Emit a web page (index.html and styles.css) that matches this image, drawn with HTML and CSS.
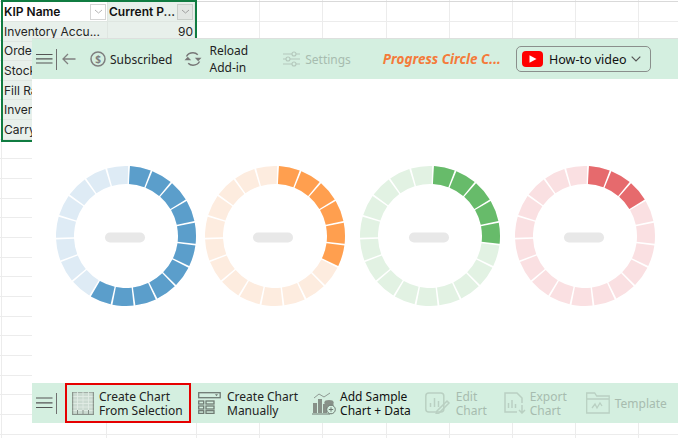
FILE: index.html
```html
<!DOCTYPE html>
<html lang="en">
<head>
<meta charset="utf-8">
<title>Progress Circle Chart</title>
<link rel="stylesheet" href="styles.css">
</head>
<body>
<div class="sheet">
  <div class="table">
    <div class="cell head active"><span>KIP Name</span><i class="filter"><svg width="9" height="5" viewBox="0 0 9 5"><path d="M1 1l3.5 3L8 1" fill="none" stroke="#b5b5b5"/></svg></i></div>
    <div class="cell head"><span>Current P...</span><i class="filter on"><svg width="9" height="5" viewBox="0 0 9 5"><path d="M1 1l3.5 3L8 1" fill="none" stroke="#a0a0a0"/></svg></i></div>
    <div class="cell">Inventory Accu...</div><div class="cell num">90</div>
    <div class="cell">Order</div><div class="cell"></div>
    <div class="cell">Stock</div><div class="cell"></div>
    <div class="cell">Fill Rate</div><div class="cell"></div>
    <div class="cell">Inventory</div><div class="cell"></div>
    <div class="cell">Carry</div><div class="cell"></div>
  </div>
</div>

<section class="panel">
  <header class="bar top">
    <svg class="ic-menu" width="17" height="12" viewBox="0 0 17 12"><path d="M0 1.500h16.500M0 5.800h16.500M0 10h16.500" stroke="#555" stroke-width="1.200"/></svg>
    <span class="rule tall"></span>
    <svg class="ic-back" width="14" height="12" viewBox="0 0 14 12"><path d="M13.500 6H1M6 1L1 6l5 5" fill="none" stroke="#808080" stroke-width="1.300"/></svg>
    <svg class="ic-sub" width="16" height="16" viewBox="0 0 16 16"><circle cx="8" cy="8" r="7" fill="none" stroke="#7f7f7f" stroke-width="1.500"/><text x="8" y="11.800" text-anchor="middle" class="dollar">$</text></svg>
    <span class="label sub">Subscribed</span>
    <svg class="ic-reload" width="18" height="16" viewBox="0 0 18 16"><path d="M2.500 5.500C3.800 3 6 1.800 9 1.800c2 0 3.500.7 4.800 2M15.500 10.500C14.200 13 12 14.200 9 14.200c-2 0-3.500-.7-4.800-2" fill="none" stroke="#777" stroke-width="1.500"/><path d="M17.500 6.800H10.800l3.400 3.500zM.5 9.200h6.700L3.800 5.700z" fill="#777"/></svg>
    <span class="label reload">Reload<br>Add-in</span>
    <svg class="ic-set" width="17" height="16" viewBox="0 0 17 16"><g fill="none" stroke="#b4c8bc" stroke-width="1.100"><path d="M0 3h9M13 3h4M0 8h3M7 8h10M0 13h9M13 13h4"/><circle cx="11" cy="3" r="2"/><circle cx="5" cy="8" r="2"/><circle cx="11" cy="13" r="2"/></g></svg>
    <span class="label off settings">Settings</span>
    <span class="title">Progress Circle C...</span>
    <div class="video">
      <svg width="21" height="16" viewBox="0 0 21 16"><rect width="21" height="16" rx="4" fill="#f00"/><path d="M7.500 4.200l7 3.800-7 3.800z" fill="#fff"/></svg>
      <span class="video-text">How-to video</span>
      <svg class="chev" width="10" height="6" viewBox="0 0 10 6"><path d="M.7.7L5 5l4.300-4.300" fill="none" stroke="#555" stroke-width="1.200"/></svg>
    </div>
  </header>

  <main class="charts">
    <svg class="ring" width="140" height="140" viewBox="0 0 140 140">
      <circle class="track t-blue" cx="70" cy="70" r="61" pathLength="360"/>
      <circle class="fill f-blue n11" cx="70" cy="70" r="61" pathLength="360"/>
      <rect class="dash" x="49" y="66.500" width="40" height="10" rx="5"/>
    </svg>
    <svg class="ring" width="140" height="140" viewBox="0 0 140 140">
      <circle class="track t-orange" cx="70" cy="70" r="61" pathLength="360"/>
      <circle class="fill f-orange n6" cx="70" cy="70" r="61" pathLength="360"/>
      <rect class="dash" x="48" y="66.500" width="40" height="10" rx="5"/>
    </svg>
    <svg class="ring" width="140" height="140" viewBox="0 0 140 140">
      <circle class="track t-green" cx="70" cy="70" r="61" pathLength="360"/>
      <circle class="fill f-green n5" cx="70" cy="70" r="61" pathLength="360"/>
      <rect class="dash" x="49" y="66.500" width="40" height="10" rx="5"/>
    </svg>
    <svg class="ring" width="140" height="140" viewBox="0 0 140 140">
      <circle class="track t-red" cx="70" cy="70" r="61" pathLength="360"/>
      <circle class="fill f-red n3" cx="70" cy="70" r="61" pathLength="360"/>
      <rect class="dash" x="49" y="66.500" width="40" height="10" rx="5"/>
    </svg>
  </main>

  <footer class="bar bottom">
    <svg class="ic-menu" width="17" height="12" viewBox="0 0 17 12"><path d="M0 1h16.500M0 5.800h16.500M0 10.500h16.500" stroke="#555" stroke-width="1.200"/></svg>
    <span class="rule short"></span>
    <div class="tool selected">
      <svg width="22" height="23" viewBox="0 0 22 23"><rect x=".5" y=".5" width="21" height="22" fill="#cbdad1" stroke="#a3aea7"/><path d="M0 4.500h22M0 8h22M0 11.500h22M0 15h22M0 18.500h22M5.500 0v23M11 0v23M16.500 0v23" stroke="#e3eee7" stroke-width=".8"/><path d="M.7 0v23M21.300 0v23M0 22.400h22M5.500 18v5M11 18v5M16.500 18v5" stroke="#858f88"/></svg>
      <span class="label two">Create Chart<br>From Selection</span>
    </div>
    <div class="tool manual">
      <svg width="23" height="22" viewBox="0 0 23 22"><g fill="none" stroke="#6f7a73" stroke-width="1.300"><rect x=".7" y=".7" width="21.500" height="5"/><rect x=".7" y="9" width="5" height="3"/><rect x="8" y="9" width="8" height="3"/><rect x=".7" y="14" width="5" height="3"/><rect x="8" y="14" width="8" height="3"/><rect x=".7" y="18.700" width="5" height="2.700"/><rect x="8" y="18.700" width="8" height="2.700"/></g><path d="M17 2.200h3l-1.500 2z" fill="#6f7a73"/></svg>
      <span class="label two">Create Chart<br>Manually</span>
    </div>
    <div class="tool sample">
      <svg width="24" height="23" viewBox="0 0 24 23"><g fill="#879088"><rect x="1" y="11" width="4" height="10"/><rect x="6" y="7" width="4" height="14"/><rect x="11" y="12" width="4" height="9"/></g><path d="M0 22h18" stroke="#6f7a73"/><path d="M2 6l5-4 5 3 6-4" fill="none" stroke="#8f9a93"/><ellipse cx="17" cy="10" rx="4.500" ry="2" fill="#879088"/><path d="M12.500 10v6h9v-6" fill="#879088"/><circle cx="19" cy="17.500" r="4.300" fill="#d4efe0" stroke="#6f7a73"/><path d="M19 15.300v4.400M16.800 17.500h4.400" stroke="#6f7a73"/></svg>
      <span class="label two strong">Add Sample<br>Chart + Data</span>
    </div>
    <div class="tool edit">
      <svg width="26" height="22" viewBox="0 0 26 22"><g fill="none" stroke="#b9d0c2" stroke-width="1.500"><rect x=".8" y="1" width="18" height="19" rx="3"/><path d="M5.500 15V11M9.500 15V6M13.500 15V9M14 21l10-10-2-2-10 10-1 3z"/></g></svg>
      <span class="label two off">Edit<br>Chart</span>
    </div>
    <div class="tool export">
      <svg width="22" height="22" viewBox="0 0 22 22"><g fill="none" stroke="#b9d0c2" stroke-width="1.500"><path d="M13 20H1V1h12l5 5v5"/><path d="M4.500 16v-5M8 16V8M11.500 16v-4M18 13v8M15 18l3 3 3-3"/></g></svg>
      <span class="label two off">Export<br>Chart</span>
    </div>
    <div class="tool template">
      <svg width="24" height="22" viewBox="0 0 24 22"><g fill="none" stroke="#b9d0c2" stroke-width="1.300"><path d="M.7 21V1h8l2 3h12.500v17zM.7 7h22.500M6 16l3-4 2 4 3-5 2 3"/></g></svg>
      <span class="label off">Template</span>
    </div>
  </footer>
</section>
</body>
</html>
```
FILE: styles.css
```css
* { box-sizing: border-box; }
html, body { margin: 0; height: 100%; }
body {
  width: 678px;
  height: 438px;
  overflow: hidden;
  position: relative;
  background: #fff;
  font-family: "Noto Sans", "Open Sans", sans-serif;
}
.sheet {
  height: 438px;
  padding: 0 0 0 1px;
  background-color: #fff;
  background-image:
    linear-gradient(#d9d9d9, #d9d9d9),
    repeating-linear-gradient(to bottom, transparent 0, transparent 18.66px, #ececec 18.66px, #ececec 19.66px),
    repeating-linear-gradient(to right, #ececec 0, #ececec 1px, transparent 1px, transparent 63.2px),
    linear-gradient(#ececec, #ececec),
    linear-gradient(#ececec, #ececec);
  background-size: 100% 1px, 100% 100%, calc(100% - 196px) 100%, 1px 100%, 1px 100%;
  background-position: 0 1px, 0 2px, 196px 0, 106px 0, 1px 0;
  background-repeat: no-repeat, no-repeat, no-repeat, no-repeat, no-repeat;
}
.table {
  width: 196px;
  display: grid;
  grid-template-columns: 105px 87px;
  grid-template-rows: 20px repeat(6, 19.6px);
  border: 2px solid #107c41;
  font-family: "Inter", "Noto Sans", sans-serif;
  font-size: 12px;
  color: #242424;
}
.cell {
  display: flex;
  align-items: center;
  padding: 0 1px;
  white-space: nowrap;
  overflow: hidden;
  background: #e8f0eb;
  border-bottom: 1px solid #dfe6e1;
  border-right: 1px solid #dfe6e1;
}
.head {
  font-weight: 600;
  justify-content: space-between;
  padding-right: 1px;
  color: #111;
}
.head.active { background: #fff; }
.num { justify-content: flex-end; padding-right: 1px; }
.filter {
  width: 16px;
  height: 16px;
  display: flex;
  align-items: center;
  justify-content: center;
  border: 1px solid #d5d5d5;
  background: #fff;
  flex: none;
}
.filter.on { background: #e2e6e3; border-color: #c8cec9; }

.panel {
  position: absolute;
  left: 32px;
  top: 38px;
  width: 646px;
  height: 385px;
  display: flex;
  flex-direction: column;
  background: #fff;
}
.bar {
  display: flex;
  align-items: center;
  background: #d4efe0;
  flex: none;
  padding-left: 4px;
  font-size: 12px;
  color: #222;
}
.bar svg { flex: none; }
.top { height: 41px; border-top: 1px solid #dde0de; }
.bottom { height: 40px; }
.rule { width: 1px; background: #707070; margin-left: 3px; flex: none; }
.rule.tall { height: 21px; }
.rule.short { height: 21px; }
.label { white-space: nowrap; margin-top: 1px; }
.label.two { line-height: 14px; }
.label.off { color: #a7bcaf; }
.label.strong { color: #111; }
.label.reload { margin-left: 7px; margin-top: 0; line-height: 17px; }
.dollar { font: 700 10px "Noto Sans", sans-serif; fill: #7f7f7f; }
.ic-back { margin-left: 5px; }
.ic-sub { margin-left: 14px; }
.sub { margin-left: 4px; }
.ic-reload { margin-left: 12px; }
.ic-set { margin-left: 35px; }
.settings { margin-left: 5px; }
.title {
  margin-left: 32px;
  font-size: 13.500px;
  font-weight: 700;
  font-style: italic;
  color: #f47b3a;
  white-space: nowrap;
}
.video {
  margin-left: 15px;
  width: 135px;
  height: 26px;
  flex: none;
  display: flex;
  align-items: center;
  padding: 0 5px;
  border: 1px solid #8a8f8c;
  border-radius: 5px;
  color: #111;
}
.video-text { margin-left: 6px; font-size: 12.500px; }
.chev { margin-left: auto; margin-right: 4px; }

.charts {
  flex: 1;
  display: flex;
  align-items: flex-start;
  padding: 87px 0 0 24px;
  gap: 9px;
}
.ring { flex: none; }
.ring:nth-child(3) { margin-left: 6px; }
.ring:nth-child(4) { margin-left: 6px; }
.track, .fill { fill: none; stroke-width: 18px; transform: rotate(-86.750deg); transform-origin: 70px 70px; }
.track { stroke-dasharray: 17.447 1.500; }
.t-blue { stroke: #deebf5; }
.f-blue { stroke: #5b9ecb; }
.t-orange { stroke: #fdecdf; }
.f-orange { stroke: #ff9f4f; }
.t-green { stroke: #e2f2e3; }
.f-green { stroke: #67bb6a; }
.t-red { stroke: #fae0e2; }
.f-red { stroke: #e66a6d; }
.n3 { stroke-dasharray: 17.447 1.500 17.447 1.500 17.447 360; }
.n5 { stroke-dasharray: 17.447 1.500 17.447 1.500 17.447 1.500 17.447 1.500 17.447 360; }
.n6 { stroke-dasharray: 17.447 1.500 17.447 1.500 17.447 1.500 17.447 1.500 17.447 1.500 17.447 360; }
.n11 { stroke-dasharray: 17.447 1.500 17.447 1.500 17.447 1.500 17.447 1.500 17.447 1.500 17.447 1.500 17.447 1.500 17.447 1.500 17.447 1.500 17.447 1.500 17.447 360; }
.dash { fill: #e8e8e8; }

.tool { display: flex; align-items: center; height: 40px; flex: none; }
.selected {
  margin-left: 8px;
  width: 126px;
  border: 2.500px solid #e60000;
  padding-left: 5px;
  gap: 5px;
}
.manual { margin-left: 7px; gap: 6px; }
.sample { margin-left: 14px; gap: 4px; }
.edit { margin-left: 14px; gap: 5px; }
.export { margin-left: 17px; gap: 4px; }
.template { margin-left: 19px; gap: 5px; }
```
